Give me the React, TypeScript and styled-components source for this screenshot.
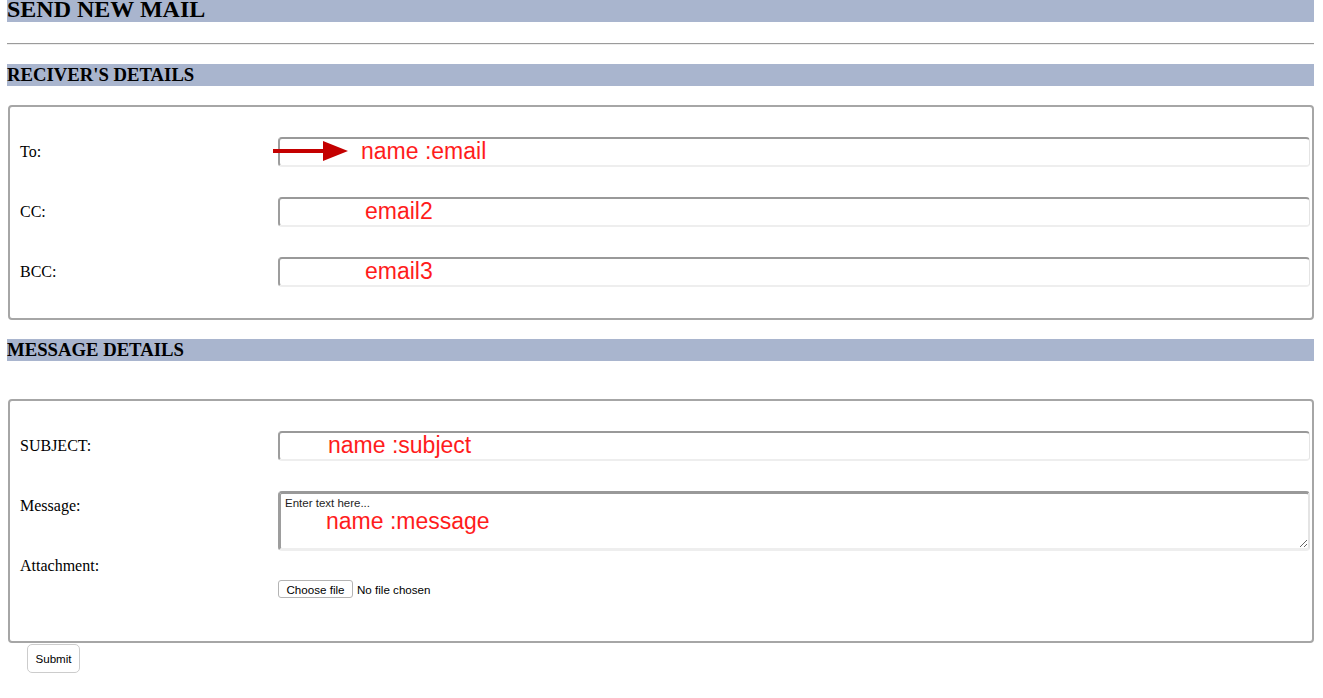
import React from "react";
import styled, { createGlobalStyle } from "styled-components";

const GlobalStyle = createGlobalStyle`
  html, body {
    margin: 0;
    padding: 0;
    background: #ffffff;
  }
  body {
    font-family: "Liberation Serif", "Times New Roman", serif;
    color: #000000;
  }
`;

const Page = styled.div`
  padding: 0 9px 0 7px;
`;

const TitleBar = styled.h2`
  margin: 0;
  background-color: #a9b5ce;
  font-size: 24px;
  font-weight: bold;
  line-height: 18px;
  padding-bottom: 4px;
`;

const Divider = styled.hr`
  margin: 21px 0 0;
  height: 0;
  border: none;
  border-top: 1px solid #9b9b9b;
  border-bottom: 1px solid #eeeeee;
`;

const SectionBar = styled.h3<{ $top: number }>`
  margin: ${({ $top }) => $top}px 0 0;
  background-color: #a9b5ce;
  font-size: 18.72px;
  font-weight: bold;
  line-height: 22px;
`;

const Box = styled.fieldset<{ $top: number; $bottom: number }>`
  margin: ${({ $top }) => $top}px 0 0 1px;
  padding: 30px 2px ${({ $bottom }) => $bottom}px 10px;
  border: 2px solid #a6a6a6;
  border-radius: 4px;
  display: flex;
  flex-direction: column;
  min-width: 0;
`;

const Row = styled.div<{ $gap?: number }>`
  display: grid;
  grid-template-columns: 258px 1fr;
  align-items: start;
  margin-top: ${({ $gap }) => $gap ?? 0}px;
`;

const Label = styled.label`
  font-size: 16px;
  line-height: 30px;
`;

const FieldWrap = styled.div`
  position: relative;
`;

const TextInput = styled.input`
  display: block;
  box-sizing: border-box;
  width: 100%;
  height: 30px;
  margin: 0;
  border-style: solid;
  border-width: 2px 1px 2px 2px;
  border-color: #999999 #e4e4e4 #eeeeee #9d9d9d;
  border-radius: 4px;
  background: #ffffff;
  outline: none;
`;

const TextArea = styled.textarea`
  display: block;
  box-sizing: border-box;
  width: 100%;
  height: 60px;
  margin: 0;
  padding: 2px 4px;
  border-style: solid;
  border-width: 3px 2px 3px 3px;
  border-color: #999999 #e4e4e4 #eeeeee #9d9d9d;
  border-radius: 4px;
  font-family: "Liberation Sans", Arial, sans-serif;
  font-size: 11.5px;
  line-height: 14px;
  outline: none;

  &::placeholder {
    color: #1e1e1e;
  }
`;

const Note = styled.span<{ $left: number; $top?: number }>`
  position: absolute;
  left: ${({ $left }) => $left}px;
  top: ${({ $top }) => $top ?? -1}px;
  font-family: "Liberation Sans", Arial, sans-serif;
  font-size: 23px;
  line-height: 30px;
  color: #ff1c1c;
  white-space: nowrap;
  pointer-events: none;
`;

const Arrow = styled.svg`
  position: absolute;
  left: -5px;
  top: 3px;
`;

const FileCell = styled.div`
  display: flex;
  align-items: center;
  gap: 4px;
  padding-top: 29px;
  font-family: "Liberation Sans", Arial, sans-serif;
  font-size: 11.6px;
`;

const FileButton = styled.button`
  box-sizing: border-box;
  height: 18px;
  width: 75px;
  padding: 0;
  border: 1px solid #b4b4b4;
  border-radius: 3px;
  background: #ffffff;
  font-family: inherit;
  font-size: inherit;
  color: #000000;
`;

const SubmitButton = styled.button`
  display: block;
  box-sizing: border-box;
  width: 53px;
  height: 29px;
  margin: 1px 0 0 20px;
  padding: 0;
  border: 1px solid #cccccc;
  border-radius: 5px;
  background: #ffffff;
  font-family: "Liberation Sans", Arial, sans-serif;
  font-size: 11.6px;
  color: #000000;
`;

const App = () => {
  return (
    <Page>
      <GlobalStyle />
      <TitleBar>SEND NEW MAIL</TitleBar>
      <Divider />

      <SectionBar $top={19}>RECIVER'S DETAILS</SectionBar>
      <Box $top={19} $bottom={31}>
        <Row>
          <Label htmlFor="email">To:</Label>
          <FieldWrap>
            <TextInput id="email" name="email" type="text" />
            <Arrow width="80" height="24" viewBox="0 0 80 24">
              <rect x="0" y="9" width="54" height="4" fill="#c40000" />
              <polygon points="50,1 75,11 50,21" fill="#c40000" />
            </Arrow>
            <Note $left={83}>name :email</Note>
          </FieldWrap>
        </Row>
        <Row $gap={30}>
          <Label htmlFor="email2">CC:</Label>
          <FieldWrap>
            <TextInput id="email2" name="email2" type="text" />
            <Note $left={87}>email2</Note>
          </FieldWrap>
        </Row>
        <Row $gap={30}>
          <Label htmlFor="email3">BCC:</Label>
          <FieldWrap>
            <TextInput id="email3" name="email3" type="text" />
            <Note $left={87}>email3</Note>
          </FieldWrap>
        </Row>
      </Box>

      <SectionBar $top={19}>MESSAGE DETAILS</SectionBar>
      <Box $top={38} $bottom={43}>
        <Row>
          <Label htmlFor="subject">SUBJECT:</Label>
          <FieldWrap>
            <TextInput id="subject" name="subject" type="text" />
            <Note $left={50}>name :subject</Note>
          </FieldWrap>
        </Row>
        <Row $gap={30}>
          <Label htmlFor="message">Message:</Label>
          <FieldWrap>
            <TextArea id="message" name="message" placeholder="Enter text here..." />
            <Note $left={48} $top={15}>name :message</Note>
          </FieldWrap>
        </Row>
        <Row>
          <Label>Attachment:</Label>
          <FileCell>
            <FileButton type="button">Choose file</FileButton>
            <span>No file chosen</span>
          </FileCell>
        </Row>
      </Box>
      <SubmitButton type="submit">Submit</SubmitButton>
    </Page>
  );
};

export default App;
